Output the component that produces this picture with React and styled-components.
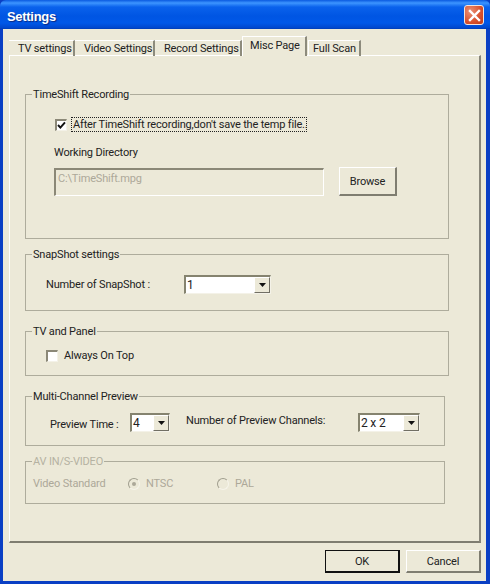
import React from "react";
import styled, { createGlobalStyle } from "styled-components";

function Settings() {
    return (
        <Window>
            <GlobalStyle />
            <TitleBar>
                <Title>Settings</Title>
                <CloseButton>
                    <svg width="13" height="13" viewBox="0 0 13 13">
                        <path d="M2 2l9 9M11 2l-9 9" stroke="#fff" strokeWidth="2.4" strokeLinecap="square" />
                    </svg>
                </CloseButton>
            </TitleBar>
            <Body>
                <TabRow>
                    <Tab $width={66}>TV settings</Tab>
                    <Tab $width={80}>Video Settings</Tab>
                    <Tab $width={87}>Record Settings</Tab>
                    <ActiveTab>Misc Page</ActiveTab>
                    <Tab $width={53} $last>Full Scan</Tab>
                </TabRow>
                <TabPage>
                    <Group $height={145} $width={424}>
                        <Legend>TimeShift Recording</Legend>
                        <GroupBody $top={22} $left={28}>
                            <Row>
                                <CheckBox $left={1}>
                                    <svg width="9" height="9" viewBox="0 0 9 9">
                                        <path d="M1 4l2.4 2.6L8 1.4" fill="none" stroke="#111" strokeWidth="2" />
                                    </svg>
                                </CheckBox>
                                <FocusLabel>After TimeShift recording,don't save the temp file..</FocusLabel>
                            </Row>
                            <Caption>Working Directory</Caption>
                            <Row>
                                <PathInput>C:\TimeShift.mpg</PathInput>
                                <BrowseButton>Browse</BrowseButton>
                            </Row>
                        </GroupBody>
                    </Group>

                    <Group $height={57} $width={424} $gap={15}>
                        <Legend>SnapShot settings</Legend>
                        <GroupBody $top={20} $left={20}>
                            <Row>
                                <Label $width={138}>Number of SnapShot :</Label>
                                <ComboBox $width={87} value="1" />
                            </Row>
                        </GroupBody>
                    </Group>

                    <Group $height={45} $width={424} $gap={20}>
                        <Legend>TV and Panel</Legend>
                        <GroupBody $top={17} $left={20}>
                            <Row>
                                <CheckBox />
                                <Label $left={6}>Always On Top</Label>
                            </Row>
                        </GroupBody>
                    </Group>

                    <Group $height={50} $width={420} $gap={20}>
                        <Legend>Multi-Channel Preview</Legend>
                        <GroupBody $top={16} $left={24}>
                            <Row>
                                <Label $width={80} $offset={2}>Preview Time :</Label>
                                <ComboBox $width={40} value="4" />
                                <Label $width={172} $left={16} $offset={-2}>Number of Preview Channels:</Label>
                                <ComboBox $width={62} value="2 x 2" />
                            </Row>
                        </GroupBody>
                    </Group>

                    <Group $height={43} $width={420} $gap={15}>
                        <Legend $disabled>AV IN/S-VIDEO</Legend>
                        <GroupBody $top={15} $left={7}>
                            <Row>
                                <Label $width={95} $disabled>Video Standard</Label>
                                <Radio $checked />
                                <Label $width={71} $left={6} $disabled>NTSC</Label>
                                <Radio />
                                <Label $left={6} $disabled>PAL</Label>
                            </Row>
                        </GroupBody>
                    </Group>
                </TabPage>
                <Footer>
                    <DialogButton $default>OK</DialogButton>
                    <DialogButton>Cancel</DialogButton>
                </Footer>
            </Body>
        </Window>
    );
}

function ComboBox({ $width, value }) {
    return (
        <Combo $width={$width}>
            <span>{value}</span>
            <ComboArrow>
                <svg width="7" height="4" viewBox="0 0 7 4">
                    <path d="M0 0h7L3.5 4z" fill="#111" />
                </svg>
            </ComboArrow>
        </Combo>
    );
}

export default Settings;

const GlobalStyle = createGlobalStyle`
    html, body {
        margin: 0;
        padding: 0;
        background: #0a3fc4;
    }
    * {
        box-sizing: border-box;
    }
`;

const Window = styled.div`
    width: 490px;
    height: 584px;
    display: flex;
    flex-direction: column;
    font-family: Roboto, "Liberation Sans", Arial, sans-serif;
    font-size: 11px;
    letter-spacing: -0.18px;
    color: #222;
`;

const TitleBar = styled.div`
    height: 29px;
    flex: none;
    display: flex;
    align-items: center;
    justify-content: space-between;
    padding: 3px 6px 0 7px;
    border-radius: 6px 6px 0 0;
    background: linear-gradient(
        to bottom,
        #0a5ae0 0,
        #3d95ff 3px,
        #0a62ec 7px,
        #0055e3 16px,
        #0058e8 23px,
        #0046cc 28px,
        #003bb0 29px
    );
`;

const Title = styled.div`
    font-family: "Liberation Sans", Arial, sans-serif;
    font-size: 13px;
    letter-spacing: -0.3px;
    font-weight: bold;
    color: #fff;
    text-shadow: 1px 1px 1px #0a2a80;
`;

const CloseButton = styled.div`
    width: 20px;
    height: 20px;
    margin-top: -2px;
    display: flex;
    align-items: center;
    justify-content: center;
    border: 1px solid #f3e4dc;
    border-radius: 3px;
    background: radial-gradient(circle at 30% 30%, #ea9176, #d8502c 60%, #bf3a17);
`;

const Body = styled.div`
    flex: 1;
    display: flex;
    flex-direction: column;
    margin: 0 4px 3px 3px;
    padding: 7px 0 0 6px;
    background: #ece9d8;
`;

const TabRow = styled.div`
    height: 20px;
    flex: none;
    display: flex;
    align-items: flex-end;
    position: relative;
    z-index: 1;
    margin-bottom: -1px;
`;

const Tab = styled.div`
    width: ${(p) => p.$width}px;
    height: 16px;
    margin-left: ${(p) => (p.$last ? 1 : 0)}px;
    padding: 1px 0 0 ${(p) => (p.$last ? 4 : 9)}px;
    line-height: 14px;
    white-space: nowrap;
    border-top: 1px solid #fff;
    border-right: 2px solid #8d8b7c;
    border-left: ${(p) => (p.$last ? "1px solid #fff" : "0")};
`;

const ActiveTab = styled.div`
    width: 65px;
    height: 20px;
    padding: 2px 0 0 7px;
    line-height: 14px;
    white-space: nowrap;
    background: #ece9d8;
    border-top: 1px solid #fff;
    border-left: 1px solid #fff;
    border-right: 2px solid #8d8b7c;
`;

const TabPage = styled.div`
    width: 472px;
    height: 488px;
    flex: none;
    padding: 38px 0 0 15px;
    border-top: 1px solid #fff;
    border-left: 1px solid #fff;
    border-right: 2px solid #87857a;
    border-bottom: 2px solid #7f7d70;
`;

const Group = styled.div`
    position: relative;
    width: ${(p) => p.$width}px;
    height: ${(p) => p.$height}px;
    margin-top: ${(p) => p.$gap || 0}px;
    border: 1px solid #aeac9c;
`;

const Legend = styled.div`
    position: absolute;
    top: -7px;
    left: 6px;
    padding: 0 1px;
    line-height: 14px;
    background: #ece9d8;
    color: ${(p) => (p.$disabled ? "#b5b2a2" : "#222")};
`;

const GroupBody = styled.div`
    display: flex;
    flex-direction: column;
    padding: ${(p) => p.$top}px 0 0 ${(p) => p.$left}px;
`;

const Row = styled.div`
    display: flex;
    align-items: center;
`;

const Label = styled.div`
    flex: none;
    width: ${(p) => (p.$width ? `${p.$width}px` : "auto")};
    margin-left: ${(p) => p.$left || 0}px;
    line-height: 14px;
    white-space: nowrap;
    position: relative;
    top: ${(p) => p.$offset || 0}px;
    color: ${(p) => (p.$disabled ? "#aca899" : "#222")};
`;

const CheckBox = styled.div`
    width: 12px;
    height: 12px;
    flex: none;
    margin-left: ${(p) => p.$left || 0}px;
    display: flex;
    align-items: center;
    justify-content: center;
    background: #fff;
    border-top: 2px solid #8b8877;
    border-left: 2px solid #8b8877;
    border-bottom: 1px solid #f4f2e8;
    border-right: 1px solid #f4f2e8;
`;

const FocusLabel = styled.div`
    margin-left: 4px;
    height: 15px;
    width: 236px;
    padding-left: 1px;
    line-height: 13px;
    white-space: nowrap;
    border: 1px dotted #222;
`;

const Caption = styled.div`
    margin-top: 14px;
    line-height: 14px;
`;

const PathInput = styled.div`
    width: 270px;
    height: 28px;
    margin-top: 7px;
    padding: 2px 0 0 2px;
    line-height: 14px;
    color: #aca899;
    border-top: 2px solid #8b8877;
    border-left: 2px solid #8b8877;
    border-bottom: 1px solid #fff;
    border-right: 1px solid #fff;
`;

const BrowseButton = styled.div`
    width: 58px;
    height: 29px;
    margin: 7px 0 0 15px;
    display: flex;
    align-items: center;
    justify-content: center;
    border-top: 1px solid #fff;
    border-left: 1px solid #fff;
    border-right: 2px solid #7f7d70;
    border-bottom: 2px solid #7f7d70;
`;

const Combo = styled.div`
    width: ${(p) => p.$width}px;
    height: 19px;
    flex: none;
    display: flex;
    align-items: center;
    justify-content: space-between;
    padding-left: 1px;
    font-size: 12px;
    background: #fff;
    border-top: 2px solid #85836f;
    border-left: 2px solid #85836f;
    border-bottom: 1px solid #f4f2e8;
    border-right: 1px solid #f4f2e8;
`;

const ComboArrow = styled.div`
    width: 16px;
    height: 16px;
    display: flex;
    align-items: center;
    justify-content: center;
    background: #ece9d8;
    border-top: 1px solid #fff;
    border-left: 1px solid #fff;
    border-right: 1px solid #716f64;
    border-bottom: 1px solid #716f64;
`;

const Radio = styled.div`
    width: 12px;
    height: 12px;
    flex: none;
    display: flex;
    align-items: center;
    justify-content: center;
    border-radius: 50%;
    border: 1px solid;
    border-color: #a09e8e #f6f4ea #f6f4ea #a09e8e;

    &::after {
        content: "";
        display: ${(p) => (p.$checked ? "block" : "none")};
        width: 4px;
        height: 4px;
        border-radius: 50%;
        background: #aca899;
    }
`;

const Footer = styled.div`
    display: flex;
    gap: 6px;
    width: 472px;
    justify-content: flex-end;
    padding-top: 7px;
`;

const DialogButton = styled.div`
    width: 75px;
    height: 23px;
    display: flex;
    align-items: center;
    justify-content: center;
    border-top: 1px solid ${(p) => (p.$default ? "#111" : "#fff")};
    border-left: 1px solid ${(p) => (p.$default ? "#111" : "#fff")};
    border-right: 2px solid ${(p) => (p.$default ? "#111" : "#7f7d70")};
    border-bottom: 2px solid ${(p) => (p.$default ? "#111" : "#7f7d70")};
`;
